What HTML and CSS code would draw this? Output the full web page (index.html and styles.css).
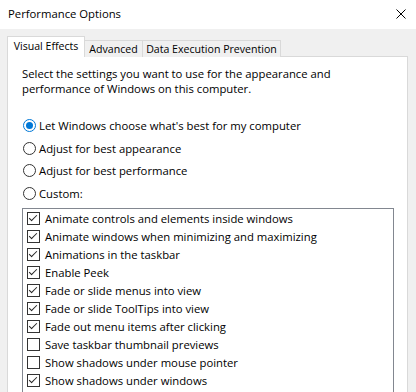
FILE: index.html
```html
<!DOCTYPE html>
<html>
<head>
<meta charset="utf-8">
<link rel="stylesheet" href="styles.css">
</head>
<body>
<div class="window">
  <div class="titlebar">
    <span class="title">Performance Options</span>
    <svg class="close" width="10" height="10" viewBox="0 0 10 10"><path d="M0.5 0.5L9.5 9.5M9.5 0.5L0.5 9.5" stroke="#000" stroke-width="1" fill="none"/></svg>
  </div>
  <div class="dialog">
    <div class="tabs">
      <div class="tab active tab-ve">Visual Effects</div>
      <div class="tab tab-adv">Advanced</div>
      <div class="tab tab-dep">Data Execution Prevention</div>
    </div>
    <div class="panel">
      <p class="intro">Select the settings you want to use for the appearance and performance of Windows on this computer.</p>
      <div class="radios">
        <div class="radio-row"><span class="radio checked"></span><span>Let Windows choose what's best for my computer</span></div>
        <div class="radio-row"><span class="radio"></span><span>Adjust for best appearance</span></div>
        <div class="radio-row"><span class="radio"></span><span>Adjust for best performance</span></div>
        <div class="radio-row"><span class="radio"></span><span>Custom:</span></div>
      </div>
      <div class="listbox">
        <div class="item"><span class="check on"></span>Animate controls and elements inside windows</div>
        <div class="item"><span class="check on"></span>Animate windows when minimizing and maximizing</div>
        <div class="item"><span class="check on"></span>Animations in the taskbar</div>
        <div class="item"><span class="check on"></span>Enable Peek</div>
        <div class="item"><span class="check on"></span>Fade or slide menus into view</div>
        <div class="item"><span class="check on"></span>Fade or slide ToolTips into view</div>
        <div class="item"><span class="check on"></span>Fade out menu items after clicking</div>
        <div class="item"><span class="check"></span>Save taskbar thumbnail previews</div>
        <div class="item"><span class="check"></span>Show shadows under mouse pointer</div>
        <div class="item"><span class="check on"></span>Show shadows under windows</div>
      </div>
    </div>
  </div>
</div>
</body>
</html>
```
FILE: styles.css
```css
html, body {
  margin: 0;
  padding: 0;
  width: 416px;
  height: 392px;
  overflow: hidden;
  background: #f0f0f0;
}
.window {
  font-family: "Open Sans", "Noto Sans", sans-serif;
  font-size: 11.3px;
  color: #000;
}
.titlebar {
  height: 29px;
  background: #fff;
  display: flex;
  align-items: center;
  justify-content: space-between;
  padding: 0 10px 2px 8px;
  box-sizing: border-box;
}
.title {
  font-size: 11.3px;
}
.close {
  display: block;
}
.dialog {
  padding: 7px 8px 0 7px;
}
.tabs {
  display: flex;
  align-items: flex-end;
  position: relative;
  z-index: 1;
  margin-bottom: -1px;
}
.tab {
  height: 17px;
  line-height: 16px;
  border: 1px solid #d9d9d9;
  border-bottom: none;
  border-left: none;
  background: #f0f0f0;
  box-sizing: border-box;
  font-size: 10.6px;
  text-align: center;
  white-space: nowrap;
}
.tab-ve { width: 78px; }
.tab-adv { width: 58px; }
.tab-dep { width: 138px; }
.tab.active {
  height: 21px;
  line-height: 19px;
  border-left: 1px solid #d9d9d9;
  background: #fff;
}
.panel {
  background: #fff;
  border: 1px solid #d9d9d9;
  height: 400px;
  padding: 9px 13px 0 14px;
}
.intro {
  margin: 0;
  line-height: 15px;
  width: 360px;
}
.radios {
  margin-top: 18px;
}
.radio-row {
  display: flex;
  align-items: center;
  height: 22.7px;
}
.radio {
  width: 13px;
  height: 13px;
  box-sizing: border-box;
  border: 1px solid #333;
  border-radius: 50%;
  margin: 0 3px 0 1px;
  position: relative;
  flex: none;
}
.radio.checked {
  border-color: #0078d7;
}
.radio.checked::after {
  content: "";
  position: absolute;
  left: 2px;
  top: 2px;
  width: 7px;
  height: 7px;
  border-radius: 50%;
  background: #0078d7;
}
.listbox {
  margin-top: 3px;
  border: 1px solid #828790;
  padding: 1px 0 20px 0;
}
.item {
  display: flex;
  align-items: center;
  height: 18px;
  padding-left: 4px;
}
.check {
  width: 13px;
  height: 13px;
  box-sizing: border-box;
  border: 1px solid #333;
  margin-right: 5px;
  position: relative;
  flex: none;
}
.check.on::after {
  content: "";
  position: absolute;
  left: 3px;
  top: 0px;
  width: 3px;
  height: 7px;
  border-right: 1px solid #222;
  border-bottom: 1px solid #222;
  transform: rotate(45deg);
}
```
